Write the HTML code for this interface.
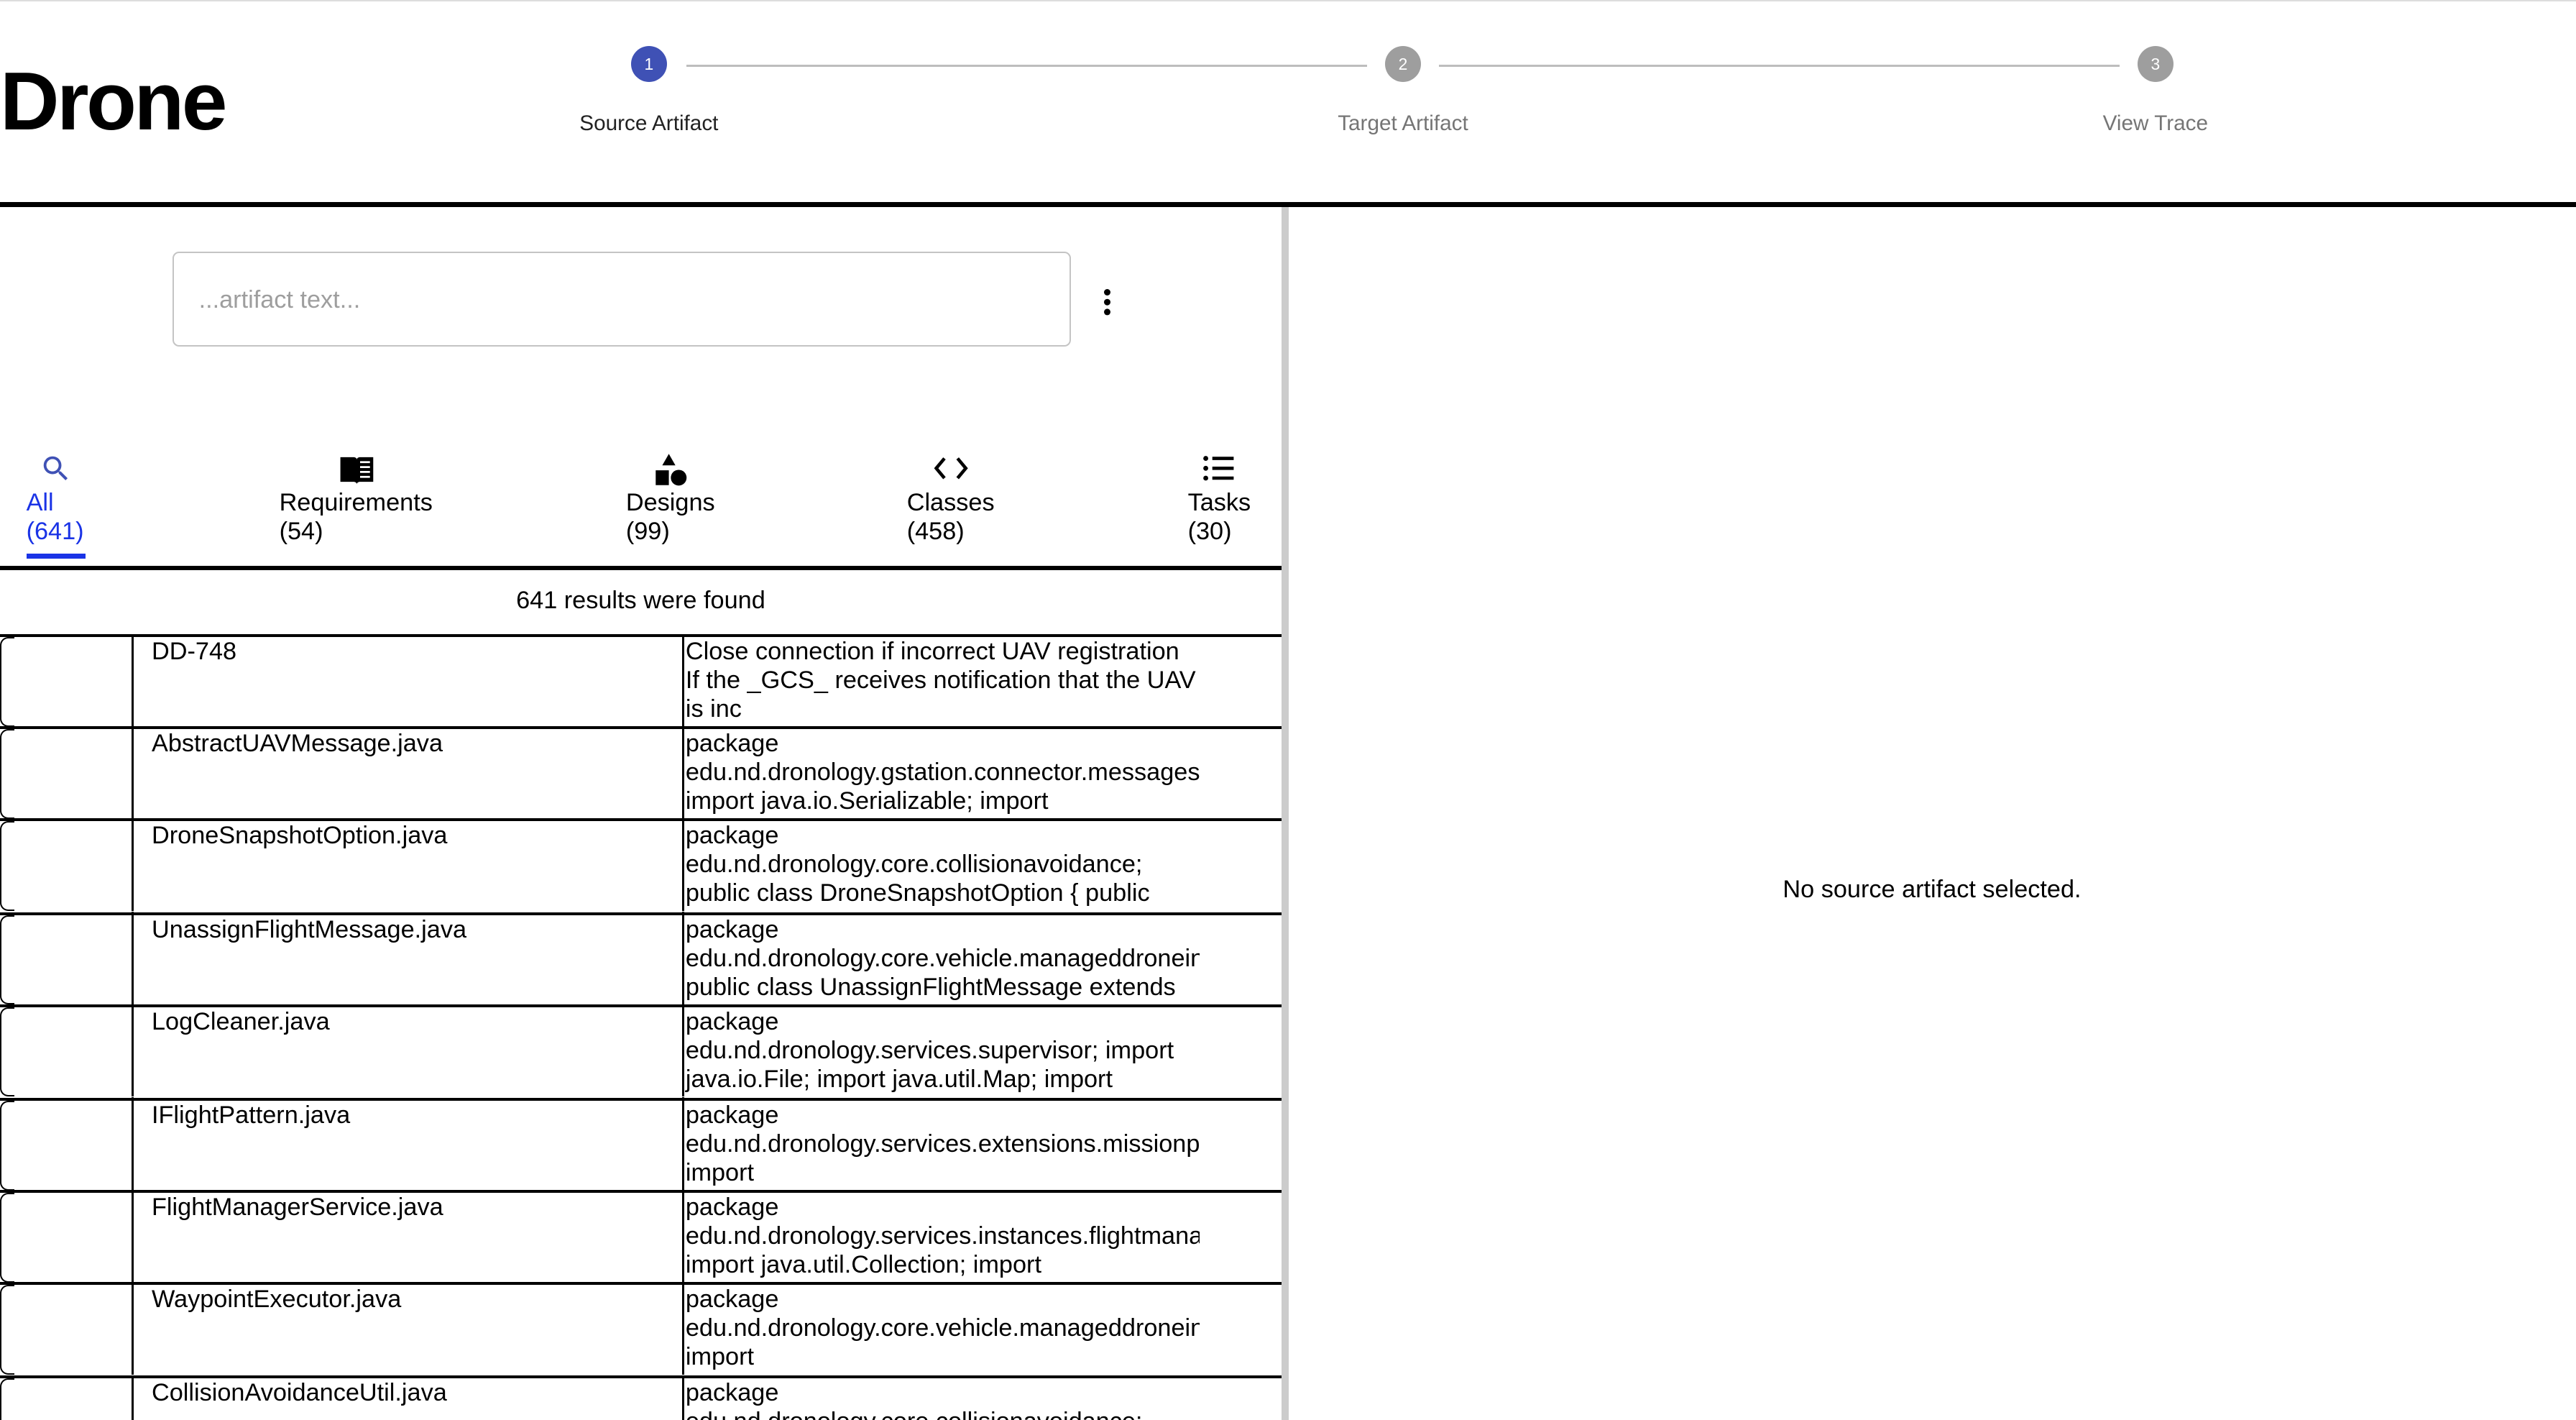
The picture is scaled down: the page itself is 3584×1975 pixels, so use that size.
<!DOCTYPE html>
<html><head><meta charset="utf-8"><style>
html,body{margin:0;padding:0;background:#fff;overflow:hidden}
body{width:1568px;height:864px;zoom:2.285714;position:relative;font-family:"Liberation Sans",Roboto,sans-serif;color:#000}
.a{position:absolute}
.row{position:absolute;left:0;width:780px;height:56.3px;border-top:2px solid #000;box-sizing:border-box}
.c1{position:absolute;left:0;bottom:0;width:8px;height:8px;border-left:1px solid #000;border-bottom:1px solid #000;border-radius:0 0 0 5px}
.c1m{position:absolute;left:0;top:6px;bottom:6px;width:1px;background:#000}
.c1b{position:absolute;left:0;top:0;width:8px;height:8px;border-left:1px solid #000;border-top:1px solid #000;border-radius:5px 0 0 0}
.c2{position:absolute;left:80px;top:-2px;width:335px;height:calc(100% + 2px);border-left:1.5px solid #000;padding-left:11px;box-sizing:border-box;font-size:15px;line-height:17.5px;padding-top:2px}
.c3{position:absolute;left:415px;top:-2px;width:315px;height:calc(100% + 2px);border-left:1.5px solid #000;padding-left:1px;box-sizing:border-box;font-size:15px;line-height:17.5px;overflow:hidden;padding-top:2px}
.c3 div{white-space:nowrap}
.tab{position:absolute;top:297px;font-size:15px;line-height:17.5px}
</style></head><body>
<div class="a" style="left:0;top:0;width:1568px;height:1px;background:#ddd"></div>
<div class="a" style="left:0;top:31px;font-size:50px;font-weight:bold;letter-spacing:-1.5px;line-height:62px">Drone</div>

<div class="a" style="left:418px;top:39.5px;width:414px;height:1px;background:#bdbdbd"></div>
<div class="a" style="left:876px;top:39.5px;width:414px;height:1px;background:#bdbdbd"></div>
<div class="a" style="left:384px;top:28px;width:22px;height:22px;border-radius:50%;background:#3f51b5;color:#fff;font-size:10px;line-height:22px;text-align:center">1</div>
<div class="a" style="left:843px;top:28px;width:22px;height:22px;border-radius:50%;background:#9e9e9e;color:#fff;font-size:10px;line-height:22px;text-align:center">2</div>
<div class="a" style="left:1301px;top:28px;width:22px;height:22px;border-radius:50%;background:#9e9e9e;color:#fff;font-size:10px;line-height:22px;text-align:center">3</div>
<div class="a" style="left:295px;width:200px;text-align:center;top:68px;font-size:13px;color:#222">Source Artifact</div>
<div class="a" style="left:754px;width:200px;text-align:center;top:68px;font-size:13px;color:#757575">Target Artifact</div>
<div class="a" style="left:1212px;width:200px;text-align:center;top:68px;font-size:13px;color:#757575">View Trace</div>

<div class="a" style="left:0;top:123px;width:1568px;height:3px;background:#000"></div>
<div class="a" style="left:780px;top:126px;width:4.5px;height:738px;background:#cccccc"></div>

<div class="a" style="left:105px;top:153px;width:547px;height:58px;border:1px solid #c4c4c4;border-radius:4px;box-sizing:border-box"></div>
<div class="a" style="left:121px;top:174px;font-size:15px;color:#9e9e9e">...artifact text...</div>
<div class="a" style="left:672px;top:176px;width:4px;height:4px;border-radius:50%;background:#000;box-shadow:0 6px 0 #000,0 12px 0 #000"></div>

<svg class="a" style="left:24px;top:275px" width="20" height="20" viewBox="0 0 24 24"><path fill="#3f51b5" d="M15.5 14h-.79l-.28-.27A6.470 6.470 0 0 0 16 9.5 6.5 6.5 0 1 0 9.5 16c1.61 0 3.09-.59 4.230-1.57l.27.28v.79l5 4.99L20.49 19l-4.99-5zm-6 0C7.01 14 5 11.99 5 9.5S7.01 5 9.5 5 14 7.01 14 9.5 11.99 14 9.5 14z"/></svg>
<svg class="a" style="left:205px;top:275px" width="24" height="22" viewBox="0 0 24 22"><path d="M2 3h8c1 0 2 .5 2 1.5C12 3.5 13 3 14 3h8v15h-8c-1 0-2 .5-2 1.5 0-1-1-1.5-2-1.5H2z" fill="#000"/><path d="M14 6h6M14 9h6M14 12h6M14 15h6" stroke="#fff" stroke-width="1.2"/></svg>
<svg class="a" style="left:398px;top:275px" width="22" height="22" viewBox="0 0 22 22"><path d="M9 1l4 7H5z M1 11h8v9H1z" fill="#000"/><circle cx="15" cy="15.5" r="4.8" fill="#000"/></svg>
<svg class="a" style="left:568px;top:277px" width="22" height="16" viewBox="0 0 22 16"><path d="M7 2L2 8l5 6M15 2l5 6-5 6" fill="none" stroke="#000" stroke-width="2"/></svg>
<svg class="a" style="left:732px;top:277px" width="20" height="16" viewBox="0 0 20 16"><circle cx="2" cy="2" r="1.5"/><circle cx="2" cy="8" r="1.5"/><circle cx="2" cy="14" r="1.5"/><path d="M6 2h13M6 8h13M6 14h13" stroke="#000" stroke-width="2"/></svg>

<div class="tab" style="left:16px;color:#1a33e6">All<br>(641)</div>
<div class="a" style="left:16px;top:337px;width:36px;height:3px;background:#1a33e6"></div>
<div class="tab" style="left:170px">Requirements<br>(54)</div>
<div class="tab" style="left:381px">Designs<br>(99)</div>
<div class="tab" style="left:552px">Classes<br>(458)</div>
<div class="tab" style="left:723px">Tasks<br>(30)</div>

<div class="a" style="left:0;top:344.5px;width:780px;height:2.5px;background:#000"></div>
<div class="a" style="left:0;width:780px;text-align:center;top:357px;font-size:15px">641 results were found</div>

<div class="row" style="top:386px"><div class="c1"></div><div class="c1m"></div><div class="c1b"></div><div class="c2">DD-748</div><div class="c3"><div>Close connection if incorrect UAV registration</div><div>If the _GCS_ receives notification that the UAV</div><div>is inc</div></div></div>
<div class="row" style="top:442px"><div class="c1"></div><div class="c1m"></div><div class="c1b"></div><div class="c2">AbstractUAVMessage.java</div><div class="c3"><div>package</div><div>edu.nd.dronology.gstation.connector.messages;</div><div>import java.io.Serializable; import</div></div></div>
<div class="row" style="top:498px"><div class="c1"></div><div class="c1m"></div><div class="c1b"></div><div class="c2">DroneSnapshotOption.java</div><div class="c3"><div>package</div><div>edu.nd.dronology.core.collisionavoidance;</div><div>public class DroneSnapshotOption { public</div></div></div>
<div class="row" style="top:555px"><div class="c1"></div><div class="c1m"></div><div class="c1b"></div><div class="c2">UnassignFlightMessage.java</div><div class="c3"><div>package</div><div>edu.nd.dronology.core.vehicle.manageddroneinternal;</div><div>public class UnassignFlightMessage extends</div></div></div>
<div class="row" style="top:611px"><div class="c1"></div><div class="c1m"></div><div class="c1b"></div><div class="c2">LogCleaner.java</div><div class="c3"><div>package</div><div>edu.nd.dronology.services.supervisor; import</div><div>java.io.File; import java.util.Map; import</div></div></div>
<div class="row" style="top:668px"><div class="c1"></div><div class="c1m"></div><div class="c1b"></div><div class="c2">IFlightPattern.java</div><div class="c3"><div>package</div><div>edu.nd.dronology.services.extensions.missionplanning;</div><div>import</div></div></div>
<div class="row" style="top:724px"><div class="c1"></div><div class="c1m"></div><div class="c1b"></div><div class="c2">FlightManagerService.java</div><div class="c3"><div>package</div><div>edu.nd.dronology.services.instances.flightmanager;</div><div>import java.util.Collection; import</div></div></div>
<div class="row" style="top:780px"><div class="c1"></div><div class="c1m"></div><div class="c1b"></div><div class="c2">WaypointExecutor.java</div><div class="c3"><div>package</div><div>edu.nd.dronology.core.vehicle.manageddroneinternal;</div><div>import</div></div></div>
<div class="row" style="top:837px"><div class="c1"></div><div class="c1m"></div><div class="c1b"></div><div class="c2">CollisionAvoidanceUtil.java</div><div class="c3"><div>package</div><div>edu.nd.dronology.core.collisionavoidance;</div></div></div>

<div class="a" style="left:784px;width:784px;text-align:center;top:533px;font-size:15px">No source artifact selected.</div>
</body></html>
